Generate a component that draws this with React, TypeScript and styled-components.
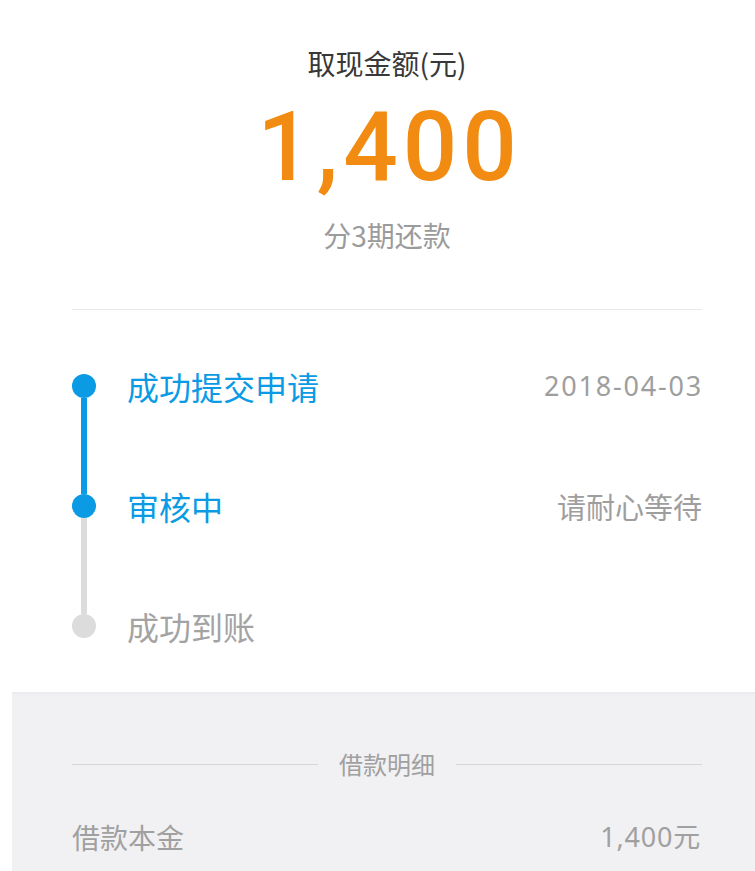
import React from "react";
import styled, { createGlobalStyle } from "styled-components";

const GlobalStyle = createGlobalStyle`
  html, body {
    margin: 0;
    padding: 0;
    background: #ffffff;
    overflow-x: hidden;
  }
  body {
    font-family: "Noto Sans", "Noto Sans CJK SC", sans-serif;
    -webkit-font-smoothing: antialiased;
  }
`;

const Page = styled.div`
  width: 750px;
  margin-left: 12px;
  background: #ffffff;
`;

const Summary = styled.section`
  padding: 47px 60px 0;
  display: flex;
  flex-direction: column;
  align-items: center;
`;

const SummaryTitle = styled.div`
  font-family: "Noto Sans CJK SC", sans-serif;
  font-size: 28px;
  line-height: 33px;
  color: #383838;
`;

const Amount = styled.div`
  margin-top: 20px;
  margin-right: -5px;
  font-family: "Roboto", "Noto Sans", sans-serif;
  font-weight: 500;
  font-size: 96px;
  line-height: 95px;
  color: #f28b12;
  letter-spacing: 5px;
`;

const Terms = styled.div`
  margin-top: 22px;
  font-family: "Noto Sans CJK SC", sans-serif;
  font-size: 28px;
  line-height: 36px;
  color: #9b9b9b;
`;

const Divider = styled.hr`
  margin: 56px 60px 0;
  border: none;
  height: 1px;
  background: #e8e8e8;
`;

const Timeline = styled.ol`
  list-style: none;
  margin: 0;
  padding: 16px 60px 6px;
  display: flex;
  flex-direction: column;
`;

const Step = styled.li`
  height: 120px;
  display: flex;
  align-items: center;
  gap: 31px;
`;

const Rail = styled.div`
  width: 24px;
  align-self: stretch;
  display: flex;
  flex-direction: column;
  align-items: center;
`;

const Segment = styled.div<{ $color: string }>`
  flex: 1;
  width: 6px;
  background: ${(p) => p.$color};
`;

const Dot = styled.div<{ $color: string }>`
  width: 24px;
  height: 24px;
  border-radius: 50%;
  background: ${(p) => p.$color};
  flex: none;
`;

const StepBody = styled.div`
  flex: 1;
  display: flex;
  align-items: center;
  justify-content: space-between;
`;

const StepTitle = styled.div<{ $active: boolean }>`
  font-family: "Noto Sans CJK SC", sans-serif;
  font-size: 32px;
  line-height: 40px;
  color: ${(p) => (p.$active ? "#0a9be4" : "#a3a3a3")};
`;

const StepMeta = styled.div<{ $numeric?: boolean }>`
  font-family: ${(p) =>
    p.$numeric ? `"Noto Sans", "Noto Sans CJK SC", sans-serif` : `"Noto Sans CJK SC", sans-serif`};
  font-size: ${(p) => (p.$numeric ? "27px" : "29px")};
  letter-spacing: ${(p) => (p.$numeric ? "1.8px" : "0")};
  margin-right: ${(p) => (p.$numeric ? "-1px" : "0")};
  line-height: 40px;
  color: #9e9e9e;
`;

const Details = styled.section`
  background: #f1f1f3;
  box-shadow: inset 0 3px 4px -2px rgba(0, 0, 0, 0.04);
  padding: 55px 60px 40px;
  min-height: 300px;
`;

const DetailsHeading = styled.div`
  display: flex;
  align-items: center;
  gap: 21px;
  font-family: "Noto Sans CJK SC", sans-serif;
  font-size: 24px;
  line-height: 34px;
  color: #a0a0a0;
`;

const Rule = styled.span`
  flex: 1;
  height: 1px;
  background: #d6d6d8;
`;

const DetailRow = styled.div`
  margin-top: 36px;
  display: flex;
  justify-content: space-between;
  align-items: center;
  font-family: "Noto Sans CJK SC", sans-serif;
  font-size: 28px;
  line-height: 40px;
  color: #a0a0a0;
`;

const DetailValue = styled.span`
  font-family: "Noto Sans", "Noto Sans CJK SC", sans-serif;
  font-size: 27px;
  letter-spacing: 0.8px;
  margin-right: 1px;
`;

const BLUE = "#0a9be4";
const GREY = "#dcdcdc";

type StepData = {
  title: string;
  meta?: string;
  numeric?: boolean;
  active: boolean;
  top: string;
  bottom: string;
};

const steps: StepData[] = [
  { title: "成功提交申请", meta: "2018-04-03", numeric: true, active: true, top: "transparent", bottom: BLUE },
  { title: "审核中", meta: "请耐心等待", active: true, top: BLUE, bottom: GREY },
  { title: "成功到账", active: false, top: GREY, bottom: "transparent" },
];

export default function App() {
  return (
    <>
      <GlobalStyle />
      <Page>
        <Summary>
          <SummaryTitle>取现金额(元)</SummaryTitle>
          <Amount>1,400</Amount>
          <Terms>分3期还款</Terms>
        </Summary>
        <Divider />
        <Timeline>
          {steps.map((s) => (
            <Step key={s.title}>
              <Rail>
                <Segment $color={s.top} />
                <Dot $color={s.active ? BLUE : GREY} />
                <Segment $color={s.bottom} />
              </Rail>
              <StepBody>
                <StepTitle $active={s.active}>{s.title}</StepTitle>
                {s.meta && <StepMeta $numeric={s.numeric}>{s.meta}</StepMeta>}
              </StepBody>
            </Step>
          ))}
        </Timeline>
        <Details>
          <DetailsHeading>
            <Rule />
            借款明细
            <Rule />
          </DetailsHeading>
          <DetailRow>
            <span>借款本金</span>
            <DetailValue>1,400元</DetailValue>
          </DetailRow>
        </Details>
      </Page>
    </>
  );
}
